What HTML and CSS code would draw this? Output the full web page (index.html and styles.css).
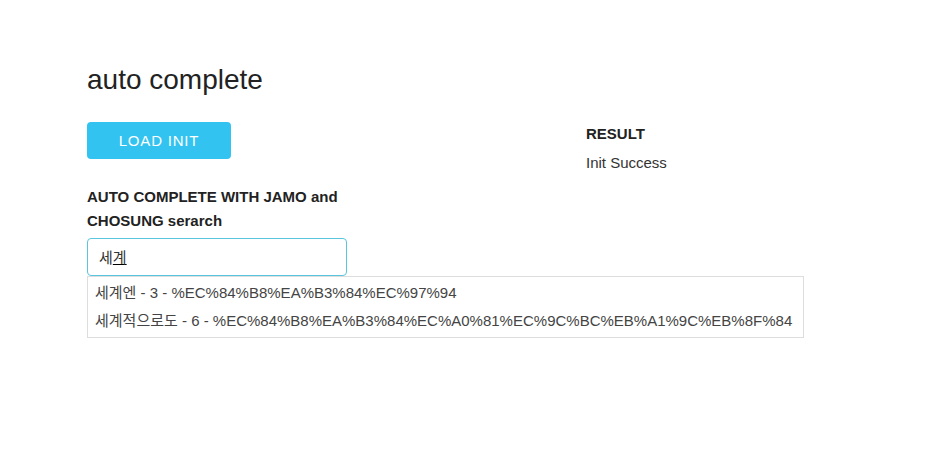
FILE: index.html
```html
<!DOCTYPE html>
<html>
<head>
<meta charset="utf-8">
<link rel="stylesheet" href="styles.css">
</head>
<body>
<div class="page">
  <h1 class="title">auto complete</h1>
  <div class="row">
    <div class="col-left">
      <button class="btn">LOAD INIT</button>
      <div class="group">
        <label class="label">AUTO COMPLETE WITH JAMO and CHOSUNG serarch</label>
        <div class="input">세<u>계</u></div>
      </div>
    </div>
    <div class="col-right">
      <div class="res-title">RESULT</div>
      <div class="res-text">Init Success</div>
    </div>
  </div>
  <ul class="dropdown">
    <li>세계엔 - 3 - %EC%84%B8%EA%B3%84%EC%97%94</li>
    <li>세계적으로도 - 6 - %EC%84%B8%EA%B3%84%EC%A0%81%EC%9C%BC%EB%A1%9C%EB%8F%84</li>
  </ul>
</div>
</body>
</html>
```
FILE: styles.css
```css
html, body {
  margin: 0;
  padding: 0;
  background: #fff;
}
body {
  font-family: "Liberation Sans", Arial, "Noto Sans CJK KR", sans-serif;
  color: #222;
}
.page {
  padding: 60px 0 0 87px;
}
.title {
  margin: 0;
  font-size: 28px;
  font-weight: normal;
  line-height: 40px;
  color: #222;
}
.row {
  display: flex;
  margin-top: 22px;
}
.col-left {
  width: 499px;
}
.btn {
  display: block;
  width: 144px;
  height: 37px;
  border: none;
  border-radius: 4px;
  background: #33c3f0;
  color: #fff;
  font-family: "Liberation Sans", Arial, sans-serif;
  font-size: 15px;
  letter-spacing: 0.8px;
  padding: 0;
}
.group {
  margin-top: 26px;
  width: 260px;
}
.label {
  display: block;
  font-size: 15px;
  font-weight: bold;
  line-height: 24px;
  color: #222;
}
.input {
  margin-top: 5px;
  box-sizing: border-box;
  height: 38px;
  border: 1px solid #5bc5de;
  border-radius: 4px;
  padding: 0 11px;
  font-family: "Noto Sans CJK KR", sans-serif;
  font-size: 15px;
  line-height: 36px;
  color: #333;
}
.input u {
  text-decoration-color: #000;
}
.col-right {
  padding-top: 3px;
}
.res-title {
  font-size: 15px;
  font-weight: bold;
  line-height: 18px;
}
.res-text {
  margin-top: 11px;
  font-size: 15px;
  color: #333;
  line-height: 18px;
}
.dropdown {
  list-style: none;
  margin: 0;
  padding: 2px 0 2px;
  box-sizing: border-box;
  width: 717px;
  border: 1px solid #ddd;
  font-family: "Liberation Sans", Arial, "Noto Sans CJK KR", sans-serif;
  font-size: 15px;
  color: #444;
}
.dropdown li {
  padding: 0 7px;
  line-height: 28px;
  height: 28px;
  white-space: nowrap;
}
```
